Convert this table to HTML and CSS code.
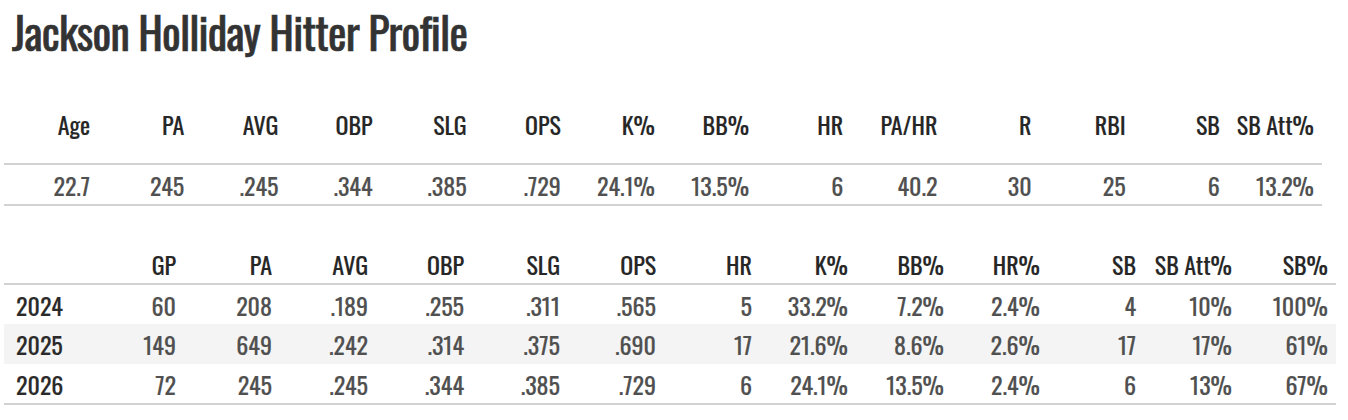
FILE: index.html
```html
<!DOCTYPE html>
<html lang="en">
<head>
<meta charset="utf-8">
<title>Jackson Holliday Hitter Profile</title>
<link rel="stylesheet" href="styles.css">
</head>
<body>
<div class="page">
  <h1 class="title">Jackson Holliday Hitter Profile</h1>

  <table class="stats summary">
    <thead>
      <tr>
        <th>Age</th><th>PA</th><th>AVG</th><th>OBP</th><th>SLG</th><th>OPS</th><th>K%</th><th>BB%</th><th>HR</th><th>PA/HR</th><th>R</th><th>RBI</th><th>SB</th><th>SB Att%</th>
      </tr>
    </thead>
    <tbody>
      <tr>
        <td>22.7</td><td>245</td><td>.245</td><td>.344</td><td>.385</td><td>.729</td><td>24.1%</td><td>13.5%</td><td>6</td><td>40.2</td><td>30</td><td>25</td><td>6</td><td>13.2%</td>
      </tr>
    </tbody>
  </table>

  <table class="stats seasons">
    <thead>
      <tr>
        <th class="year"></th><th>GP</th><th>PA</th><th>AVG</th><th>OBP</th><th>SLG</th><th>OPS</th><th>HR</th><th>K%</th><th>BB%</th><th>HR%</th><th>SB</th><th>SB Att%</th><th>SB%</th>
      </tr>
    </thead>
    <tbody>
      <tr>
        <th class="year">2024</th><td>60</td><td>208</td><td>.189</td><td>.255</td><td>.311</td><td>.565</td><td>5</td><td>33.2%</td><td>7.2%</td><td>2.4%</td><td>4</td><td>10%</td><td>100%</td>
      </tr>
      <tr class="alt">
        <th class="year">2025</th><td>149</td><td>649</td><td>.242</td><td>.314</td><td>.375</td><td>.690</td><td>17</td><td>21.6%</td><td>8.6%</td><td>2.6%</td><td>17</td><td>17%</td><td>61%</td>
      </tr>
      <tr>
        <th class="year">2026</th><td>72</td><td>245</td><td>.245</td><td>.344</td><td>.385</td><td>.729</td><td>6</td><td>24.1%</td><td>13.5%</td><td>2.4%</td><td>6</td><td>13%</td><td>67%</td>
      </tr>
    </tbody>
  </table>
</div>
</body>
</html>
```

FILE: styles.css
```css
* { box-sizing: border-box; }

html, body {
  margin: 0;
  padding: 0;
  background: #ffffff;
}

body {
  font-family: "Oswald", "Roboto Condensed", "Liberation Sans Narrow", "DejaVu Sans Condensed", "Roboto", sans-serif;
  font-stretch: condensed;
  color: #333333;
}

.page {
  padding: 0 0 0 4px;
  width: 1340px;
}

.title {
  margin: 0;
  padding: 6px 0 0 8px;
  height: 84px;
  font-size: 44px;
  font-weight: 400;
  line-height: 52px;
  color: #333333;
  letter-spacing: -0.8px;
  -webkit-text-stroke: 0.6px #333333;
}

.stats {
  border-collapse: collapse;
  table-layout: fixed;
  font-size: 24px;
}

.stats th,
.stats td {
  text-align: right;
  padding: 0 8px 0 0;
  white-space: nowrap;
  font-weight: 400;
}

.stats th {
  color: #262626;
  -webkit-text-stroke: 0.15px #262626;
}

.stats td {
  color: #505050;
  -webkit-text-stroke: 0.15px #505050;
}

.summary {
  width: 1318px;
}

.summary th,
.summary td {
  width: 94px;
}

.summary thead tr {
  height: 80px;
}

.summary tbody tr {
  height: 41px;
  border-top: 2px solid #d2d2d2;
  border-bottom: 2px solid #d2d2d2;
}

.seasons {
  width: 1332px;
  margin-top: 38px;
}

.seasons th,
.seasons td {
  width: 96px;
}

.seasons thead tr {
  height: 40px;
}

.seasons thead {
  border-bottom: 2px solid #d2d2d2;
}

.seasons tbody tr {
  height: 40px;
}

.seasons tbody tr:last-child {
  border-bottom: 2px solid #d2d2d2;
}

.seasons .year {
  width: 84px;
  text-align: left;
  padding: 0 0 0 12px;
  color: #2a2a2a;
  -webkit-text-stroke: 0.15px #2a2a2a;
}

.seasons tr.alt {
  background: #f4f4f4;
}
```
